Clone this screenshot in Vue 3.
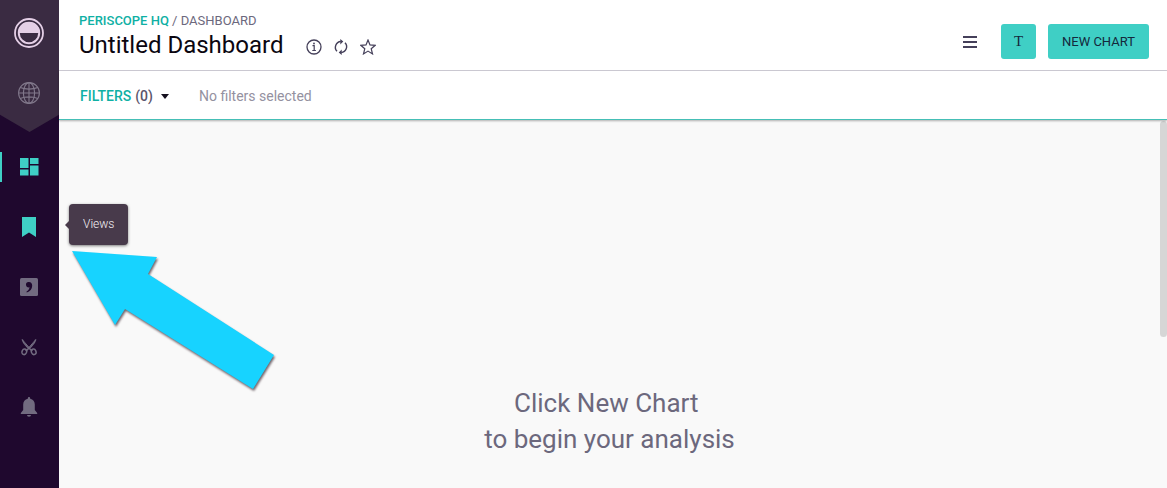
<script setup>
import { ref } from 'vue'

const title = ref('Untitled Dashboard')
const filterCount = ref(0)
</script>

<template>
  <div class="app">
    <nav class="sidebar" aria-label="Main">
      <div class="brand">
        <a class="cell" href="#home" aria-label="Home">
          <svg width="32" height="32" viewBox="0 0 32 32">
            <circle cx="16" cy="16" r="14" fill="none" stroke="#e4cfe6" stroke-width="1.8" />
            <circle cx="16" cy="16" r="10.2" fill="none" stroke="#e4cfe6" stroke-width="2" />
            <path d="M5 16a11 11 0 0 1 22 0z" fill="#e4cfe6" />
          </svg>
        </a>
        <a class="cell" href="#sites" aria-label="Sites">
          <svg width="24" height="24" viewBox="0 0 24 24" fill="none" stroke="#81788b" stroke-width="1.1">
            <circle cx="12" cy="12" r="10.4" />
            <ellipse cx="12" cy="12" rx="5.6" ry="10.4" />
            <path d="M12 1.6v20.8M1.6 12h20.8M3.2 6.6c5 2 12.600 2 17.600 0M3.200 17.400c5-2 12.600-2 17.600 0" />
          </svg>
        </a>
      </div>
      <div class="links">
        <a class="cell active" href="#dashboards" aria-label="Dashboards">
          <svg width="20" height="20" viewBox="0 0 20 20" fill="#3fcfc5">
            <path d="M1 1h8.500v10H1zM11 1h8.500v6H11zM1 12.500h8.500v6H1zM11 8.500h8.500v10H11z" />
          </svg>
        </a>
        <a class="cell" href="#views" aria-describedby="views-tip" aria-label="Views">
          <svg width="20" height="20" viewBox="0 0 20 20" fill="#3fcfc5">
            <path d="M3 0h14v20l-7-4.500L3 20z" />
          </svg>
          <span id="views-tip" class="tooltip" role="tooltip">Views</span>
        </a>
        <a class="cell" href="#discussions" aria-label="Discussions">
          <svg width="20" height="20" viewBox="0 0 20 20">
            <rect x="1" y="1" width="18" height="18" rx="1.500" fill="#726b80" />
            <path d="M7 7.700a2.700 2.700 0 0 1 3-2.700c2 0 3.200 1.500 3.200 3.700 0 3.300-2.200 5.700-5.400 6.800l-.4-.8c1.800-1 3-2.500 3.100-4.400-1.800.5-3.500-.7-3.500-2.600z" fill="#1f082e" />
          </svg>
        </a>
        <a class="cell" href="#snippets" aria-label="Snippets">
          <svg width="20" height="20" viewBox="0 0 20 20" fill="none" stroke="#726b80" stroke-width="1.500">
            <path d="M3.200 2.400c.6 2.400 2 4.600 4.800 7.200l5.300 4.400M16.800 2.400c-.6 2.400-2 4.600-4.800 7.200L6.700 14" />
            <path d="M4 3.500l7 8M16 3.500l-7 8" stroke-width="1" />
            <ellipse cx="5.300" cy="14.800" rx="2.300" ry="2.800" transform="rotate(25 5.300 14.800)" />
            <ellipse cx="14.700" cy="14.800" rx="2.300" ry="2.800" transform="rotate(-25 14.700 14.800)" />
          </svg>
        </a>
        <a class="cell" href="#alerts" aria-label="Alerts">
          <svg width="20" height="20" viewBox="0 0 20 20" fill="#726b80">
            <path d="M8.800 1.300a1.200 1.200 0 0 1 2.400 0v.5c2.900.6 4.600 2.900 4.600 5.700v5.500l2.400 3v1H1.800v-1l2.400-3V7.500c0-2.800 1.700-5.100 4.600-5.700zM8 18h4a2 1.800 0 0 1-4 0z" />
          </svg>
        </a>
      </div>
    </nav>

    <div class="page">
      <header class="topbar">
        <div class="heading">
          <div class="crumbs"><a href="#hq">PERISCOPE HQ</a> / DASHBOARD</div>
          <div class="title-row">
            <h1>{{ title }}</h1>
            <div class="tools">
              <button type="button" aria-label="Information">
                <svg width="16" height="16" viewBox="0 0 16 16" fill="none" stroke="#45405a" stroke-width="1.300">
                  <circle cx="8" cy="8" r="7" />
                  <path d="M6.500 6.700h1.700v4.800M6.300 11.500h3.600" stroke-width="1.200" />
                  <circle cx="8" cy="4.500" r=".9" fill="#45405a" stroke="none" />
                </svg>
              </button>
              <button type="button" aria-label="Refresh">
                <svg width="16" height="16" viewBox="0 0 16 16" fill="none" stroke="#45405a" stroke-width="1.400">
                  <path d="M4 12.300A5.800 5.800 0 0 1 7.800 2.500M12 3.700a5.800 5.800 0 0 1-3.800 9.800" />
                  <path d="M7.300 0l3 2.600-3 2.800zM8.700 10.600l-3 2.800 3 2.600z" fill="#45405a" stroke="none" />
                </svg>
              </button>
              <button type="button" aria-label="Favorite">
                <svg width="16" height="16" viewBox="0 0 16 16" fill="none" stroke="#45405a" stroke-width="1.200">
                  <path d="M8 1l2 4.900 5.200.4-4 3.400 1.300 5.200L8 12.100l-4.500 2.800 1.300-5.200-4-3.400L6 5.900z" />
                </svg>
              </button>
            </div>
          </div>
        </div>
        <div class="actions">
          <button type="button" class="menu" aria-label="Menu">
            <svg width="14" height="12" viewBox="0 0 14 12" fill="#45405a">
              <path d="M0 0h14v2H0zM0 5h14v2H0zM0 10h14v2H0z" />
            </svg>
          </button>
          <button type="button" class="primary text" aria-label="Add text">T</button>
          <button type="button" class="primary">NEW CHART</button>
        </div>
      </header>

      <section class="filters">
        <button type="button" class="filter-toggle">
          <span class="filter-name">FILTERS</span>
          <span>({{ filterCount }})</span>
          <svg width="8" height="5" viewBox="0 0 8 5"><path d="M0 0h8L4 5z" fill="#15101f" /></svg>
        </button>
        <span class="filter-state">No filters selected</span>
      </section>

      <main class="canvas">
        <p class="empty">Click New Chart&nbsp;<br />to begin your analysis</p>
        <div class="scroll-thumb"></div>
      </main>
    </div>

    <svg class="pointer" width="220" height="160" viewBox="0 0 220 160" aria-hidden="true">
      <path d="M2 1L87 7 78 24l126 81-21 34L55 59 45 75z" fill="#17d3ff" />
    </svg>
  </div>
</template>

<style>
body {
  margin: 0;
}
</style>

<style scoped>
.app {
  position: relative;
  display: flex;
  min-height: 100vh;
  background: #f9f9f9;
  font-family: Roboto, "Liberation Sans", sans-serif;
  color: #6c687d;
}

button {
  padding: 0;
  border: 0;
  background: none;
  font: inherit;
  color: inherit;
  cursor: pointer;
}

svg {
  display: block;
}

a {
  text-decoration: none;
}

.sidebar {
  flex: 0 0 59px;
  background: #1f082e;
}

.brand {
  box-sizing: border-box;
  padding: 3px 0 9px;
  background: #3a2b42;
  clip-path: polygon(0 0, 100% 0, 100% 87%, 50% 100%, 0 87%);
}

.links {
  padding-top: 5px;
}

.cell {
  position: relative;
  display: flex;
  align-items: center;
  justify-content: center;
  height: 60px;
  padding-right: 1px;
}

.active::before {
  content: "";
  position: absolute;
  left: 0;
  top: 15px;
  width: 2px;
  height: 30px;
  background: #3fcfc5;
}

.tooltip {
  position: absolute;
  left: 69px;
  top: 7px;
  z-index: 2;
  padding: 0 14px;
  border-radius: 4px;
  background: #483a4b;
  box-shadow: 0 1px 3px rgba(0, 0, 0, 0.5);
  color: #f4f0f5;
  font-size: 12px;
  font-weight: 300;
  line-height: 41px;
}

.tooltip::before {
  content: "";
  position: absolute;
  left: -4px;
  top: 17px;
  border: solid transparent;
  border-width: 4px 4px 4px 0;
  border-right-color: #483a4b;
}

.page {
  flex: 1;
  min-width: 0;
  display: flex;
  flex-direction: column;
}

.topbar {
  display: flex;
  justify-content: space-between;
  padding: 13px 18px 9px 20px;
  border-bottom: 1px solid #cfccd6;
  background: #fff;
}

.crumbs {
  font-size: 13px;
  line-height: 16px;
}

.crumbs a {
  color: #0fb0a4;
  font-weight: 500;
}

.title-row {
  display: flex;
  align-items: center;
  gap: 23px;
}

h1 {
  margin: 0;
  color: #0b0610;
  font-size: 24px;
  font-weight: 400;
  line-height: 32px;
}

.tools {
  display: flex;
  gap: 11px;
  padding-top: 4px;
}

.actions {
  display: flex;
  align-items: center;
  padding-top: 8px;
}

.menu {
  padding: 7px 6px 5px;
  margin-right: 18px;
}

.primary {
  height: 35px;
  padding: 0 14px;
  border-radius: 3px;
  background: #3fcfc5;
  color: #14293c;
  font-size: 13px;
}

.text {
  width: 35px;
  padding: 0;
  margin-right: 12px;
  font-family: "Liberation Serif", serif;
  font-size: 15px;
}

.filters {
  position: relative;
  box-sizing: border-box;
  display: flex;
  align-items: center;
  gap: 30px;
  height: 49px;
  padding: 2px 21px 0;
  border-bottom: 1px solid #45bfb6;
  background: #fff;
  box-shadow: 0 1px 2px rgba(0, 0, 0, 0.3);
  font-size: 14px;
}

.filter-toggle {
  display: flex;
  align-items: center;
  gap: 4px;
  color: #5a556b;
  font-weight: 500;
}

.filter-toggle svg {
  margin-left: 4px;
}

.filter-name {
  color: #0fb0a4;
}

.filter-state {
  color: #94919f;
}

.canvas {
  flex: 1;
  display: flex;
  align-items: flex-start;
}

.empty {
  flex: 1;
  margin: 0;
  padding: 265px 0 30px;
  text-align: center;
  font-size: 26px;
  line-height: 36px;
}

.scroll-thumb {
  width: 7px;
  height: 216px;
  margin-top: 1px;
  border-radius: 4px;
  background: #d6d6d6;
}

.pointer {
  position: absolute;
  left: 70px;
  top: 250px;
  filter: drop-shadow(1px 2px 1px rgba(40, 20, 30, 0.65));
}
</style>
